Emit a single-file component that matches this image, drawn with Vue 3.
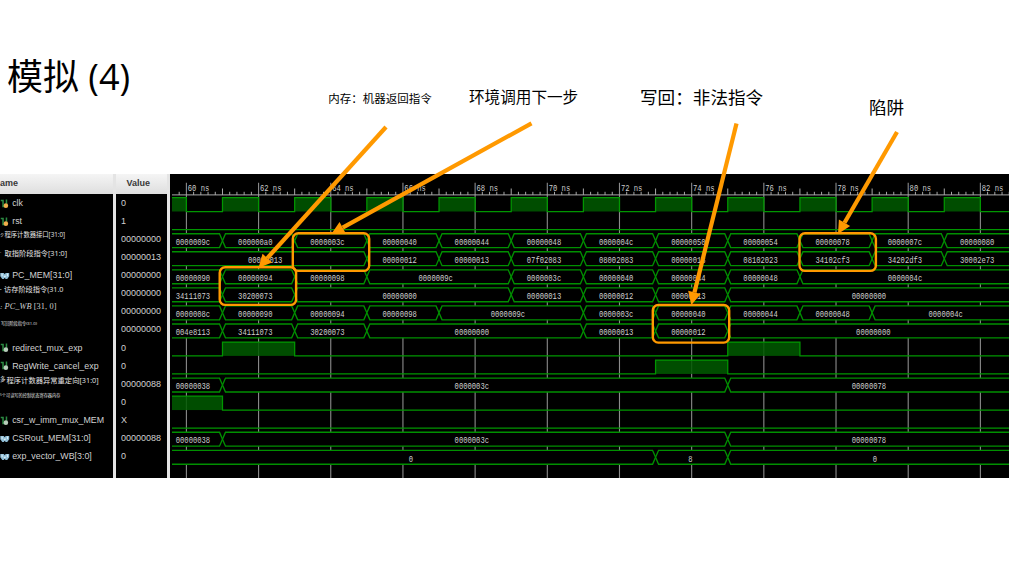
<script setup>
const PITCH = 18.05
const STEP = 36.09
const EDGE = 1016.7
// x coordinate of a simulation time in ns
const tx = (ns) => (ns === 59 ? 2 : 186.4 + (ns - 60) * STEP - 170)
const yTop = (row) => 23.6 + row * PITCH
const yBot = (row) => 37.5 + row * PITCH

const signals = [
  { name: 'clk', icon: 'in', value: '0', kind: 'plain' },
  { name: 'rst', icon: 'in', value: '1', kind: 'plain' },
  { name: '程序计数器接口[31:0]', mark: 'ク', value: '00000000', kind: 'pcif' },
  { name: '取指阶段指令[31:0]', mark: '′', value: '00000013', kind: 'instif' },
  { name: 'PC_MEM[31:0]', icon: 'bus', value: '00000000', kind: 'plain' },
  { name: '访存阶段指令(31.0', mark: '•', value: '00000000', kind: 'instmem' },
  { name: 'PC_WB', range: '[31, 0]', mark: ':', value: '00000000', kind: 'math' },
  { name: '写回阶段指令(31.0)', value: '00000000', kind: 'instwb' },
  { name: 'redirect_mux_exp', icon: 'sig', value: '0', kind: 'plain' },
  { name: 'RegWrite_cancel_exp', icon: 'sig', value: '0', kind: 'plain' },
  { name: '程序计数器异常重定向[31:0]', mark: '多', value: '00000088', kind: 'redirect' },
  { name: '个可读写的控制状态寄存器内存', mark: '5', value: '0', kind: 'csr' },
  { name: 'csr_w_imm_mux_MEM', icon: 'sig', value: 'X', kind: 'plain' },
  { name: 'CSRout_MEM[31:0]', icon: 'bus', value: '00000088', kind: 'plain' },
  { name: 'exp_vector_WB[3:0]', icon: 'bus', value: '0', kind: 'plain' },
]

// bus rows: [start ns, label, optional label centre]
const buses = {
  2: [[58, '0000009c'], [61, '000000a0'], [63, '0000003c'], [65, '00000040'], [67, '00000044'], [69, '00000048'], [71, '0000004c'], [73, '00000050'], [75, '00000054'], [77, '00000078'], [79, '0000007c'], [81, '00000080']],
  3: [[58, '00000013'], [65, '00000012'], [67, '00000013'], [69, '07f02083'], [71, '08002083'], [73, '00000013'], [75, '08102023'], [77, '34102cf3'], [79, '34202df3'], [81, '30002e73']],
  4: [[58, '00000090'], [61, '00000094'], [63, '00000098'], [65, '0000009c'], [69, '0000003c'], [71, '00000040'], [73, '00000044'], [75, '00000048'], [77, '0000004c']],
  5: [[58, '34111073'], [61, '30200073'], [63, '00000000'], [69, '00000013'], [71, '00000012'], [73, '00000013'], [75, '00000000']],
  6: [[58, '0000008c'], [61, '00000090'], [63, '00000094'], [65, '00000098'], [67, '0000009c'], [71, '0000003c'], [73, '00000040'], [75, '00000044'], [77, '00000048'], [79, '0000004c', 775.7]],
  7: [[58, '004e8113'], [61, '34111073'], [63, '30200073'], [65, '00000000'], [71, '00000013'], [73, '00000012'], [75, '00000000', 703.3]],
  10: [[58, '00000038'], [61, '0000003c'], [75, '00000078']],
  13: [[58, '00000038'], [61, '0000003c'], [75, '00000078']],
  14: [[58, '0', 241], [73, '8', 520.4], [75, '0', 705]],
}

const cells = Object.entries(buses).flatMap(([r, list]) => {
  const row = Number(r)
  return list.map(([ns, label, centre], i) => {
    const first = i === 0
    const last = i === list.length - 1
    const x0 = first ? 0 : tx(ns)
    const x1 = last ? EDGE - 170 : tx(list[i + 1][0])
    const t = yTop(row)
    const b = yBot(row)
    const m = (t + b) / 2
    const left = first ? `M2 ${b}V${t}` : `M${x0 + 3} ${b}L${x0} ${m}L${x0 + 3} ${t}`
    const line = first
      ? `M2 ${t}H${x1 - 3}L${x1} ${m}L${x1 - 3} ${b}H2`
      : last
        ? `M${x1} ${b}H${x0 + 3}L${x0} ${m}L${x0 + 3} ${t}H${x1}`
        : `M${x0 + 3} ${t}H${x1 - 3}L${x1} ${m}L${x1 - 3} ${b}H${x0 + 3}L${x0} ${m}Z`
    return {
      key: `${r}-${ns}`,
      fill: `${left}H${x1 - 3}L${x1} ${m}L${x1 - 3} ${b}Z`,
      line,
      label,
      tx: (centre ?? (x0 + x1) / 2 - 3.3) - label.length * 2.15,
      ty: t + 11.2,
      len: label.length * 4.3,
    }
  })
})

// single-bit rows: intervals during which the signal is high
const bits = [
  { row: 0, high: [[59, 60], ...Array.from({ length: 11 }, (_, i) => [61 + 2 * i, 62 + 2 * i])] },
  { row: 1, high: [] },
  { row: 8, high: [[61, 63], [75, 77]] },
  { row: 9, high: [[73, 75]] },
  { row: 11, high: [[59, 61]] },
  { row: 12, high: [] },
].map(({ row, high }) => {
  const t = yTop(row)
  const b = yBot(row)
  let d = high.length && high[0][0] === 59 ? `M2 ${t}` : `M2 ${b}`
  high.forEach(([a, z]) => {
    d += a === 59 ? `H${tx(z === 61 ? 61 : z)}V${b}` : `H${tx(a)}V${t}H${tx(z)}V${b}`
  })
  return {
    row,
    line: `${d}H840`,
    blocks: high.map(([a, z]) => ({ x: tx(a), y: t, w: tx(z) - tx(a), h: b - t })),
  }
})

const majors = Array.from({ length: 12 }, (_, i) => ({ x: tx(60 + 2 * i), text: `${60 + 2 * i} ns` }))
const minors = []
for (let i = -1; i < 116; i++) {
  const x = 16.4 + i * (STEP / 5)
  if (i % 10 !== 0 && x < 840) minors.push({ x, y: i % 5 === 0 ? 14.5 : 17.8 })
}

const notes = [
  { text: '内存：机器返回指令', kind: 'mret' },
  { text: '环境调用下一步', kind: 'ecall' },
  { text: '写回：非法指令', kind: 'illegal' },
  { text: '陷阱', kind: 'trap' },
]

const arrows = [
  [386, 127, 258.6, 267.7],
  [531.5, 123.3, 331.3, 234],
  [736.5, 123.5, 691.3, 305],
  [897, 132, 838, 234],
].map(([x1, y1, x2, y2]) => {
  const n = Math.hypot(x2 - x1, y2 - y1)
  const ux = (x2 - x1) / n
  const uy = (y2 - y1) / n
  const bx = x2 - ux * 13
  const by = y2 - uy * 13
  return {
    x1, y1, bx, by,
    head: `${x2},${y2} ${bx - uy * 6.5},${by + ux * 6.5} ${bx + uy * 6.5},${by - ux * 6.5}`,
  }
})

const boxes = [
  { x: 219.7, y: 267.3 },
  { x: 292.8, y: 233.3 },
  { x: 652.8, y: 305 },
  { x: 799.5, y: 233.3 },
]
</script>

<template>
  <main class="slide">
    <h1 class="title">模拟 (4)</h1>

    <section class="viewer">
      <div class="col names">
        <div class="head"><span class="head-name">ame</span></div>
        <div v-for="s in signals" :key="s.name" class="row" :class="s.kind">
          <svg v-if="s.icon === 'bus'" class="icon" viewBox="0 0 10 10">
            <path d="M0.3 2H4L5 3.5L6 2H9.7V5.5L7.6 8.3H6L5 7L4 8.3H2.4L0.3 5.5Z" fill="#8fbdd6" />
            <path d="M2.2 2.5V5.5M7.8 2.5V5.5M4 5L5 6L6 5" fill="none" stroke="#e2f2f8" stroke-width="1.1" />
          </svg>
          <svg v-else-if="s.icon" class="icon" viewBox="0 0 10 10">
            <path d="M0.8 1.5H3.2V8H5M6.8 0.5V5" fill="none" stroke="#2b8a42" stroke-width="1.6" />
            <circle cx="6.2" cy="7" r="2.4" :fill="s.icon === 'in' ? '#f2ae4c' : '#b9cdbb'" />
          </svg>
          <span v-else class="mark">{{ s.mark }}</span>
          <span class="label">{{ s.name }}<span v-if="s.range" class="range">{{ s.range }}</span></span>
        </div>
      </div>
      <div class="col values">
        <div class="head">Value</div>
        <div v-for="s in signals" :key="s.name" class="row">{{ s.value }}</div>
      </div>

      <svg class="wave" width="839" height="304" viewBox="0 0 839 304">
        <rect width="839" height="304" fill="#000" />
        <g stroke="#8c8c8c" stroke-width="1.1">
          <line v-for="m in majors" :key="m.x" :x1="m.x" :x2="m.x" y1="8.7" y2="304" />
        </g>
        <g stroke="#a8a8a8" stroke-width="1">
          <line x1="2" x2="839" y1="20.9" y2="20.9" />
          <line v-for="m in minors" :key="m.x" :x1="m.x" :x2="m.x" :y1="m.y" y2="21" />
        </g>
        <g class="mono">
          <text v-for="m in majors" :key="m.text" :x="m.x + 1.4" y="16.6" textLength="21.5" lengthAdjust="spacingAndGlyphs">{{ m.text }}</text>
        </g>
        <g v-for="b in bits" :key="b.row">
          <rect v-for="k in b.blocks" :key="k.x" :x="k.x" :y="k.y" :width="k.w" :height="k.h" fill="#005a00" fill-opacity="0.86" />
          <path :d="b.line" fill="none" stroke="#009600" stroke-width="1.25" />
        </g>
        <g v-for="c in cells" :key="c.key">
          <path :d="c.fill" fill="#000" />
          <path :d="c.line" fill="none" stroke="#009000" stroke-width="1.35" />
        </g>
        <g class="mono">
          <text v-for="c in cells" :key="c.key" :x="c.tx" :y="c.ty" :textLength="c.len" lengthAdjust="spacingAndGlyphs">{{ c.label }}</text>
        </g>
      </svg>
    </section>

    <span v-for="n in notes" :key="n.kind" class="note" :class="n.kind">{{ n.text }}</span>

    <svg class="overlay" width="1009" height="568" viewBox="0 0 1009 568">
      <g fill="none" stroke="#ff9900" stroke-width="2.4">
        <rect v-for="b in boxes" :key="b.x" :x="b.x" :y="b.y" width="76.4" height="37.6" rx="5.5" />
      </g>
      <g v-for="a in arrows" :key="a.x1">
        <line :x1="a.x1" :y1="a.y1" :x2="a.bx" :y2="a.by" stroke="#ff9900" stroke-width="4.2" />
        <polygon :points="a.head" fill="#ff9900" />
      </g>
    </svg>
  </main>
</template>

<style>
body {
  background: #fff;
}
</style>

<style scoped>
.slide {
  position: relative;
  width: 1009px;
  height: 568px;
  overflow: hidden;
  background: #fff;
  font-family: "Open Sans", "Noto Sans", "Noto Sans CJK SC", sans-serif;
}
.title {
  box-sizing: border-box;
  height: 174px;
  margin: 0;
  padding: 52px 0 0 7px;
  font-size: 36px;
  font-weight: 400;
  line-height: 50px;
  color: #000;
}
.viewer {
  display: flex;
  height: 304px;
  background: #e4e4e4;
}
.col {
  background: #000;
  overflow: hidden;
  font-family: "Liberation Sans", "Noto Sans CJK SC", sans-serif;
  font-size: 9px;
  color: #d0d0d0;
}
.names {
  width: 113px;
  margin-right: 3px;
}
.values {
  width: 50.5px;
  margin-right: 3.5px;
}
.head {
  height: 20.4px;
  line-height: 18px;
  background: linear-gradient(#f5f5f5, #dedede);
  font-weight: 700;
  color: #383838;
  text-align: center;
}
.values .head {
  padding-right: 6px;
}
.head-name {
  display: block;
  text-align: left;
}
.row {
  display: flex;
  align-items: center;
  height: 18.09px;
  white-space: nowrap;
  line-height: 1;
}
.values .row {
  padding-left: 5px;
}
.plain {
  font-size: 8.85px;
}
.icon {
  width: 9.5px;
  height: 9.5px;
  margin-right: 2.7px;
  flex: none;
}
.mark {
  flex: none;
  width: 3px;
  margin-right: 1.5px;
  font-size: 4px;
}
.pcif,
.instif,
.instmem,
.redirect,
.csr,
.instwb {
  box-sizing: border-box;
  padding-bottom: 8px;
  font-family: "Open Sans", "Noto Sans", "Noto Sans CJK SC", sans-serif;
  color: #e4e4e4;
}
.pcif {
  font-size: 6.3px;
}
.instif {
  font-size: 7.25px;
}
.instmem {
  font-size: 7.2px;
}
.instmem .mark {
  width: 2.5px;
}
.math {
  box-sizing: border-box;
  padding-bottom: 9px;
  font-family: "Liberation Serif", serif;
  font-style: italic;
  font-size: 8.3px;
  letter-spacing: 0.1px;
}
.math .mark {
  font-size: 7px;
}
.range {
  margin-left: 2px;
  font-style: normal;
}
.instwb {
  padding-bottom: 11px;
  font-size: 4.2px;
}
.instwb .mark {
  width: 1px;
  margin-right: 0;
}
.redirect {
  font-size: 7.3px;
}
.redirect .mark {
  width: 5px;
  font-size: 5.5px;
}
.csr {
  padding-bottom: 13px;
  font-size: 4.2px;
}
.csr .mark {
  width: 1.8px;
  margin-right: 0;
  font-size: 3px;
}
.wave {
  display: block;
  flex: none;
}
.mono text {
  font-family: "Liberation Mono", monospace;
  font-size: 9.8px;
  fill: #cecece;
}
.note {
  position: absolute;
  white-space: nowrap;
  line-height: 24px;
  color: #000;
}
.mret {
  left: 328.3px;
  top: 87px;
  font-size: 11.5px;
}
.ecall {
  left: 469px;
  top: 85px;
  font-size: 15.6px;
}
.illegal {
  left: 640px;
  top: 85px;
  font-size: 17.6px;
}
.trap {
  left: 869px;
  top: 95px;
  font-size: 17.6px;
}
.overlay {
  position: absolute;
  left: 0;
  top: 0;
}
</style>
